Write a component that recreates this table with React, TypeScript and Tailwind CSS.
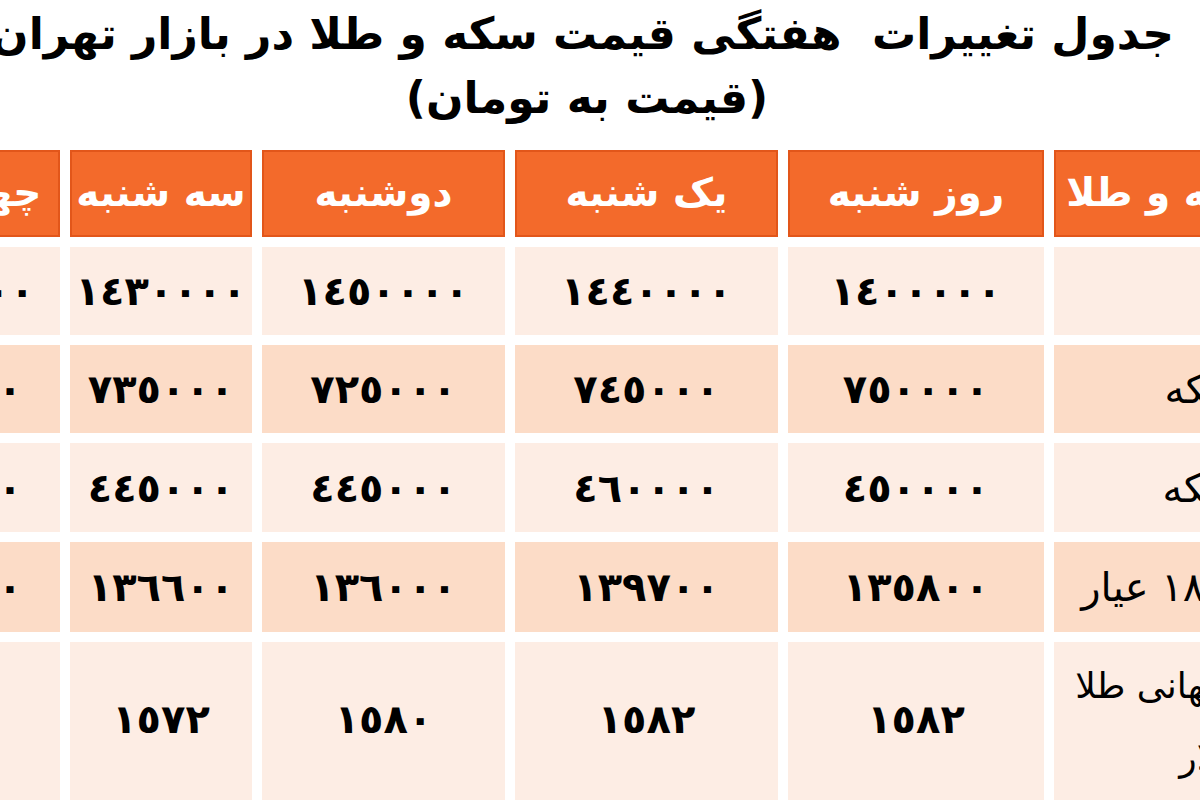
const cols = [
  { key: 'label', title: 'نوع سکه و طلا', w: 'w-[306px]' },
  { key: 'sat', title: 'روز شنبه', w: 'w-[256px]' },
  { key: 'sun', title: 'یک شنبه', w: 'w-[263px]' },
  { key: 'mon', title: 'دوشنبه', w: 'w-[243px]' },
  { key: 'tue', title: 'سه شنبه', w: 'w-[182px]' },
  { key: 'wed', title: 'چهارشنبه', w: 'w-[222px]' },
];

const rows = [
  { label: 'سکه', values: ['١٤٠٠٠٠٠', '١٤٤٠٠٠٠', '١٤٥٠٠٠٠', '١٤٣٠٠٠٠', '١٤٢٠٠٠٠'], bg: 'bg-[#fdede4]', h: 'h-[88px]' },
  { label: 'نیم سکه', values: ['٧٥٠٠٠٠', '٧٤٥٠٠٠', '٧٢٥٠٠٠', '٧٣٥٠٠٠', '٧٣٠٠٠٠'], bg: 'bg-[#fcdcc7]', h: 'h-[88px]' },
  { label: 'ربع سکه', values: ['٤٥٠٠٠٠', '٤٦٠٠٠٠', '٤٤٥٠٠٠', '٤٤٥٠٠٠', '٤٤٠٠٠٠'], bg: 'bg-[#fdede4]', h: 'h-[89px]' },
  { label: 'طلای ١٨ عیار', values: ['١٣٥٨٠٠', '١٣٩٧٠٠', '١٣٦٠٠٠', '١٣٦٦٠٠', '١٣٦٢٠٠'], bg: 'bg-[#fcdcc7]', h: 'h-[90px]' },
];

const font = { fontFamily: '"DejaVu Sans", sans-serif' };

export default function App() {
  return (
    <div className="w-[1200px] h-[800px] overflow-hidden bg-white" style={font}>
      <div dir="rtl" className="pt-[2px] pr-[26px] text-center text-black font-bold text-[44px] leading-[64px]">
        <div className="whitespace-pre">جدول تغییرات  هفتگی قیمت سکه و طلا در بازار تهران</div>
        <div>(قیمت به تومان)</div>
      </div>

      <div dir="rtl" className="mr-[-160px] mt-[20px] flex flex-col gap-[10px]">
        {/* header */}
        <div className="flex gap-[10px]">
          {cols.map((c) => (
            <div
              key={c.key}
              className={`${c.w} h-[87px] shrink-0 flex items-center justify-center whitespace-nowrap bg-[#f36a2b] border-2 border-[#e2561a] text-white font-bold text-[39px]`}
            >
              {c.title}
            </div>
          ))}
        </div>

        {rows.map((r) => (
          <div key={r.label} className="flex gap-[10px]">
            <div className={`w-[306px] ${r.h} shrink-0 flex items-center whitespace-nowrap pr-[56px] ${r.bg} text-black text-[40px]`}>
              {r.label}
            </div>
            {r.values.map((v, i) => (
              <div
                key={i}
                className={`${cols[i + 1].w} ${r.h} shrink-0 flex items-center justify-center ${r.bg} text-black font-bold text-[40px] tracking-[1px]`}
              >
                {v}
              </div>
            ))}
          </div>
        ))}

        {/* last row: gold ounce */}
        <div className="flex gap-[10px]">
          <div className="w-[306px] h-[170px] shrink-0 pt-[8px] whitespace-nowrap bg-[#fdede4] text-black text-[36px] leading-[72px]">
            <div className="pr-[56px]">انس جهانی طلا</div>
            <div className="pr-[86px]">به دلار</div>
          </div>
          {['١٥٨٢', '١٥٨٢', '١٥٨٠', '١٥٧٢', '١٥٧٠'].map((v, i) => (
            <div
              key={i}
              className={`${cols[i + 1].w} h-[170px] shrink-0 flex items-center justify-center pb-[16px] bg-[#fdede4] text-black font-bold text-[40px] tracking-[1px]`}
            >
              {v}
            </div>
          ))}
        </div>
      </div>
    </div>
  );
}
